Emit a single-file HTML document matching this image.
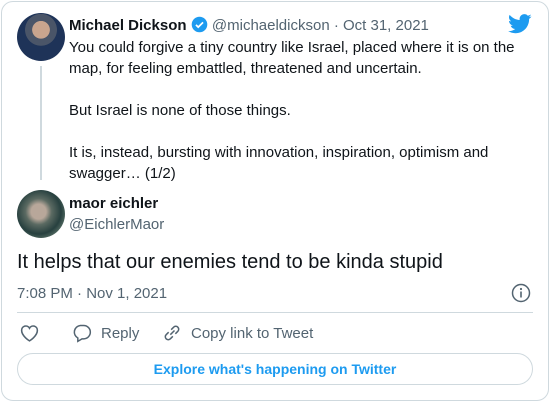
<!DOCTYPE html>
<html><head><style>
body{margin:0;width:550px;height:402px;background:#fff;font-family:"Liberation Sans",Arial,sans-serif;color:#0f1419;overflow:hidden}
.card{position:absolute;left:1px;top:1px;width:546px;height:398px;border:1px solid #cfd9de;border-radius:12px}
.a{position:absolute}
.t{font-size:15px;line-height:21px}
.g{color:#536471}
</style></head><body>
<div class="card"></div>
<div class="a" style="left:17px;top:13px;width:48px;height:48px;border-radius:50%;background:radial-gradient(circle at 50% 35%,#c9a58e 0 22%,#4a5568 23% 40%,#1e3358 41%);"></div>
<div class="a" style="left:40px;top:66px;width:2px;height:114px;background:#cfd9de"></div>
<div class="a t" style="left:69px;top:15px;white-space:nowrap"><b>Michael Dickson</b> <svg width="17" height="17" viewBox="0 0 24 24" style="vertical-align:-3px"><circle cx="12" cy="12" r="11" fill="#1d9bf0"/><path d="M7 12.5l3.2 3.2L17 9" stroke="#fff" stroke-width="2.4" fill="none"/></svg> <span class="g">@michaeldickson · Oct 31, 2021</span></div>
<svg class="a" style="left:508px;top:14px" width="24" height="20" viewBox="0 0 24 20"><path fill="#1d9bf0" d="M23.6 2.4c-.9.4-1.8.6-2.8.8 1-.6 1.8-1.6 2.1-2.7-.9.6-2 1-3.1 1.2C19 .7 17.8.1 16.4.1c-2.7 0-4.8 2.2-4.8 4.8 0 .4 0 .8.1 1.1C7.7 5.8 4.1 3.9 1.7.9c-.4.7-.7 1.600-.7 2.4 0 1.7.9 3.2 2.2 4-.8 0-1.5-.2-2.2-.6v.1c0 2.3 1.7 4.3 3.9 4.7-.4.1-.8.2-1.3.2-.3 0-.6 0-.9-.1.6 1.9 2.4 3.3 4.5 3.4-1.7 1.3-3.7 2.1-6 2.1-.4 0-.8 0-1.200-.1 2.1 1.4 4.7 2.2 7.4 2.2 8.9 0 13.7-7.4 13.7-13.7v-.6c1-.7 1.8-1.5 2.4-2.5z"/></svg>
<div class="a t" style="left:69px;top:37px;width:460px">You could forgive a tiny country like Israel, placed where it is on the map, for feeling embattled, threatened and uncertain.<br><br>But Israel is none of those things.<br><br>It is, instead, bursting with innovation, inspiration, optimism and swagger… (1/2)</div>
<div class="a" style="left:17px;top:190px;width:48px;height:48px;border-radius:50%;background:radial-gradient(circle at 45% 45%,#b8a79a 0 20%,#5b6a62 35%,#27403f 60%,#9bb09a 100%)"></div>
<div class="a t" style="left:69px;top:193px"><b>maor eichler</b></div>
<div class="a t g" style="left:69px;top:214px">@EichlerMaor</div>
<div class="a" style="left:17px;top:249px;font-size:20px;line-height:26px">It helps that our enemies tend to be kinda stupid</div>
<div class="a t g" style="left:17px;top:283px">7:08 PM · Nov 1, 2021</div>
<svg class="a" style="left:511px;top:283px" width="20" height="20" viewBox="0 0 20 20"><circle cx="10" cy="10" r="8.5" stroke="#536471" stroke-width="1.5" fill="none"/><circle cx="10" cy="6" r="1.1" fill="#536471"/><path d="M10 8.5v6" stroke="#536471" stroke-width="1.6"/></svg>
<div class="a" style="left:17px;top:312px;width:516px;height:1px;background:#cfd9de"></div>
<svg class="a" style="left:19px;top:323px" width="21" height="20" viewBox="0 0 24 22"><path d="M12 20s-9-5.5-9-12a4.8 4.8 0 0 1 9-2.5A4.8 4.8 0 0 1 21 8c0 6.5-9 12-9 12z" stroke="#536471" stroke-width="1.8" fill="none"/></svg>
<svg class="a" style="left:72px;top:323px" width="20" height="20" viewBox="0 0 24 24"><path d="M10 3h4a8 8 0 0 1 0 16h-2l-5 3v-4a8 8 0 0 1 3-15z" stroke="#536471" stroke-width="1.8" fill="none"/></svg>
<div class="a t g" style="left:101px;top:323px">Reply</div>
<svg class="a" style="left:162px;top:323px" width="20" height="20" viewBox="0 0 24 24"><path d="M10 14l5-5M8 11l-3 3a3.5 3.5 0 0 0 5 5l3-3M16 13l3-3a3.5 3.5 0 0 0-5-5l-3 3" stroke="#536471" stroke-width="1.8" fill="none"/></svg>
<div class="a t g" style="left:191px;top:323px">Copy link to Tweet</div>
<div class="a" style="left:17px;top:353px;width:514px;height:30px;border:1px solid #cfd9de;border-radius:16px;text-align:center;line-height:30px;font-size:14px;font-weight:bold;color:#1d9bf0">Explore what's happening on Twitter</div>
</body></html>
